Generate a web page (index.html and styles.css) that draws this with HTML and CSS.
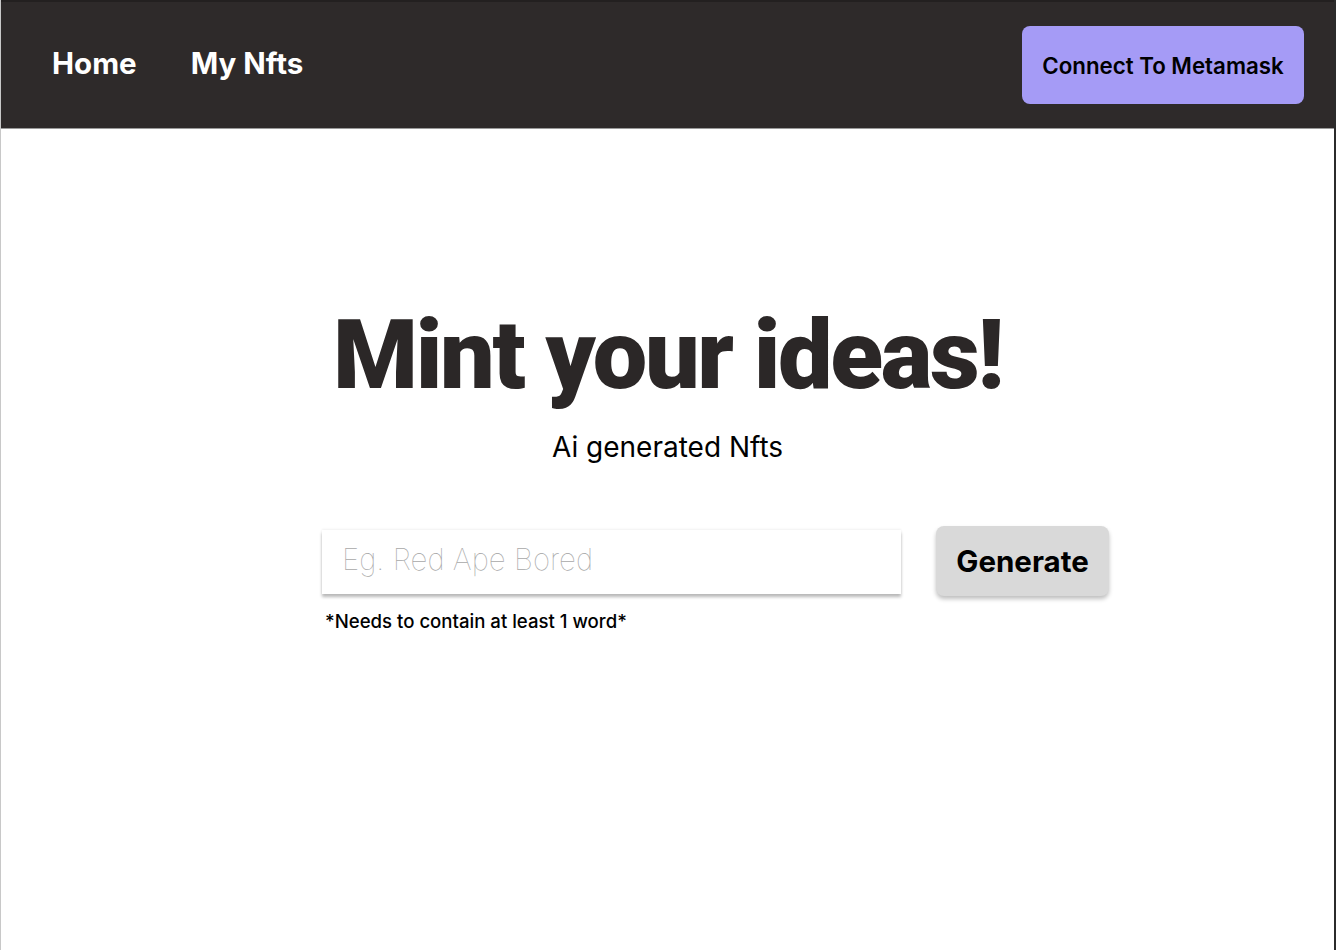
FILE: index.html
```html
<!DOCTYPE html>
<html lang="en">
<head>
<meta charset="utf-8">
<title>Mint your ideas</title>
<link rel="stylesheet" href="styles.css">
</head>
<body>
<div class="page">
  <header class="nav">
    <nav class="nav-links">
      <a class="nav-link" href="#">Home</a>
      <a class="nav-link" href="#">My Nfts</a>
    </nav>
    <button class="connect">Connect To Metamask</button>
  </header>
  <main class="hero">
    <h1 class="title">Mint your ideas!</h1>
    <p class="subtitle">Ai generated Nfts</p>
    <div class="form">
      <div class="field">
        <input class="prompt" type="text" placeholder="Eg. Red Ape Bored">
        <p class="hint">*Needs to contain at least 1 word*</p>
      </div>
      <button class="generate">Generate</button>
    </div>
  </main>
</div>
</body>
</html>
```
FILE: styles.css
```css
* { box-sizing: border-box; }
html, body { margin: 0; padding: 0; background: #fff; }
body { font-family: Inter, "Noto Sans", sans-serif; }

.page {
  width: 1336px;
  height: 950px;
  border-left: 1px solid #c8c8c8;
  border-right: 2px solid #2b2b2b;
  background: #fff;
  overflow: hidden;
}

.nav {
  height: 129px;
  background: #2e2a2a;
  border-top: 2px solid #232020;
  border-bottom: 1px solid #9a9a9a;
  display: flex;
  align-items: center;
  justify-content: space-between;
  padding: 0 30px 0 51px;
}
.nav-links { display: flex; gap: 54px; margin-top: -4px; }
.nav-link {
  color: #fff;
  text-decoration: none;
  font-size: 29.5px;
  font-weight: 700;
}
.connect {
  width: 282px;
  height: 78px;
  margin-top: 0;
  border: none;
  border-radius: 8px;
  background: #a59bf6;
  color: #000;
  font-family: Inter, sans-serif;
  font-size: 22.3px;
  font-weight: 600;
}

.hero {
  display: flex;
  flex-direction: column;
  align-items: center;
  padding-top: 166px;
}
.title {
  margin: 0;
  font-family: Roboto, "Liberation Sans", sans-serif;
  font-size: 97px;
  font-weight: 900;
  letter-spacing: -2.3px;
  color: #2b2727;
  line-height: 120px;
}
.subtitle {
  margin: 16px 0 0;
  font-size: 28px;
  font-weight: 400;
  color: #000;
  line-height: 32px;
}
.form {
  display: flex;
  align-items: flex-start;
  gap: 35px;
  margin-top: 67px;
  margin-left: 96px;
}
.field { display: flex; flex-direction: column; }
.prompt {
  width: 579px;
  height: 64px;
  border: none;
  outline: none;
  background: #fff;
  box-shadow: 0 3px 3px rgba(0,0,0,0.28), 0 -1px 2px rgba(0,0,0,0.06);
  padding: 0 20px 6px;
  font-family: Inter, sans-serif;
  font-size: 29.5px;
  font-weight: 100;
  color: #333;
}
.prompt::placeholder { color: #a8a8a8; font-weight: 100; }
.hint {
  margin: 16px 0 0 3px;
  font-size: 18.6px;
  font-weight: 500;
  color: #000;
}
.generate {
  width: 173px;
  height: 70px;
  margin-top: -4px;
  border: none;
  border-radius: 8px;
  background: #d9d9d9;
  box-shadow: 0 3px 4px rgba(0,0,0,0.25);
  font-family: Inter, sans-serif;
  font-size: 29.5px;
  font-weight: 700;
  color: #000;
}
```
